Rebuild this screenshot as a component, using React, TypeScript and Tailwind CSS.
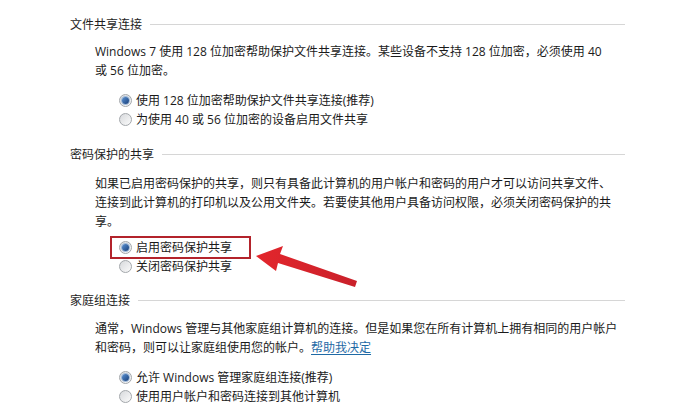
import React from 'react';

const Radio = ({ checked }: { checked?: boolean }) => (
  <span className="relative inline-flex h-[13px] w-[13px] shrink-0 items-center justify-center rounded-full border border-[#a3a7ab] bg-gradient-to-br from-[#d7d9dc] to-[#fbfbfb]">
    {checked && (
      <span className="h-[7px] w-[7px] rounded-full bg-gradient-to-br from-[#5c93d4] to-[#173f7a] shadow-[0_0_0_1px_#9fb9d8]" />
    )}
  </span>
);

const Heading = ({ title }: { title: string }) => (
  <div className="flex h-[19px] items-center gap-[8px]">
    <span className="text-[#1e1e1e]">{title}</span>
    <span className="h-px flex-1 bg-[#d6d6d6]" />
  </div>
);

const Option = ({ label, checked, boxed }: { label: string; checked?: boolean; boxed?: boolean }) => (
  <div className="relative flex h-[19px] items-center gap-[4px]">
    <Radio checked={checked} />
    <span>{label}</span>
    {boxed && (
      <span className="absolute left-[-9px] top-[-2px] h-[23px] w-[141px] border-2 border-[#b3232b]" />
    )}
  </div>
);

export default function App() {
  return (
    <div className="relative h-[416px] w-full overflow-hidden bg-white font-['Open_Sans','Noto_Sans_CJK_SC',sans-serif] text-[12px] leading-[19px] text-[#1a1a1a]">
      <div className="flex flex-col pl-[70px] pr-[56px] pt-[15px]">
        <section>
          <Heading title="文件共享连接" />
          <p className="mt-[8px] pl-[25px]">
            Windows 7 使用 128 位加密帮助保护文件共享连接。某些设备不支持 128 位加密，必须使用 40
            <br />
            或 56 位加密。
          </p>
          <div className="mt-[11px] flex flex-col pl-[49px]">
            <Option checked label="使用 128 位加密帮助保护文件共享连接(推荐)" />
            <Option label="为使用 40 或 56 位加密的设备启用文件共享" />
          </div>
        </section>

        <section className="mt-[16px]">
          <Heading title="密码保护的共享" />
          <p className="mt-[10px] pl-[25px]">
            如果已启用密码保护的共享，则只有具备此计算机的用户帐户和密码的用户才可以访问共享文件、
            <br />
            连接到此计算机的打印机以及公用文件夹。若要使其他用户具备访问权限，必须关闭密码保护的共
            <br />
            享。
          </p>
          <div className="mt-[7px] flex flex-col pl-[49px]">
            <Option checked boxed label="启用密码保护共享" />
            <Option label="关闭密码保护共享" />
          </div>
        </section>

        <section className="mt-[15px]">
          <Heading title="家庭组连接" />
          <p className="mt-[9px] pl-[25px]">
            通常，Windows 管理与其他家庭组计算机的连接。但是如果您在所有计算机上拥有相同的用户帐户
            <br />
            和密码，则可以让家庭组使用您的帐户。
            <a className="text-[#1f6aa5] underline underline-offset-2">帮助我决定</a>
          </p>
          <div className="mt-[11px] flex flex-col pl-[49px]">
            <Option checked label="允许 Windows 管理家庭组连接(推荐)" />
            <Option label="使用用户帐户和密码连接到其他计算机" />
          </div>
        </section>
      </div>

      <svg className="absolute left-0 top-0" width="681" height="416" viewBox="0 0 681 416">
        <defs>
          <linearGradient id="arr" x1="0" y1="0" x2="1" y2="0">
            <stop offset="0" stopColor="#e3262c" />
            <stop offset="1" stopColor="#c9202a" />
          </linearGradient>
        </defs>
        <polygon
          points="256,256 283,246 280,254 357,281 355,287 278,263 276,271"
          fill="url(#arr)"
        />
      </svg>
    </div>
  );
}
